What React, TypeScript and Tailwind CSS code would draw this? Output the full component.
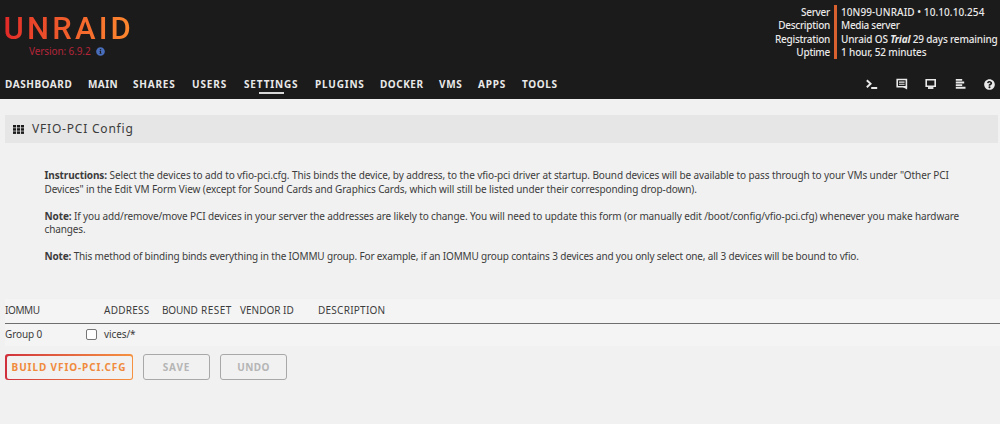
import type { ReactNode } from "react";
import { FaInfoCircle, FaQuestionCircle } from "react-icons/fa";

const tabs = [
  { label: "DASHBOARD", style: "w-[67px] tracking-[0.55px]" },
  { label: "MAIN", style: "w-[29px] tracking-[0.4px]" },
  { label: "SHARES", style: "w-[43px] tracking-[0.8px]" },
  { label: "USERS", style: "w-[36px] tracking-[0.9px]" },
  { label: "SETTINGS", style: "w-[55px] tracking-[0.85px]" },
  { label: "PLUGINS", style: "w-[49px] tracking-[0.8px]" },
  { label: "DOCKER", style: "w-[43px] tracking-[0.5px]" },
  { label: "VMS", style: "w-[23px] tracking-[0.7px]" },
  { label: "APPS", style: "w-[28px] tracking-[0.8px]" },
  { label: "TOOLS", style: "w-[35px] tracking-[0.6px]" },
];

function Icon({ children }: { children: ReactNode }) {
  return (
    <svg width="12" height="12" viewBox="0 0 12 12" fill="none" stroke="currentColor" strokeWidth="1.9">
      {children}
    </svg>
  );
}

function Header() {
  return (
    <header className="flex h-[99px] flex-col bg-[#1c1b1b] text-[#e9e9e9]">
      <div className="flex h-[68px] justify-between">
        <div className="w-[140px] pl-[3.5px] pt-3">
          <div className="w-[134px] bg-linear-to-r from-[#e22828] to-[#ff8c2f] bg-clip-text font-[Roboto,sans-serif] text-[31px] font-medium leading-[33px] tracking-[3.2px] text-transparent">
            UNRAID
          </div>
          <div className="flex items-center gap-[5px] pl-[25.5px] text-[10px] leading-[13px] tracking-[-0.1px] text-[#b3263a]">
            Version: 6.9.2
            <FaInfoCircle className="size-[9px] text-[#486dba]" />
          </div>
        </div>
        <div className="flex pt-[6px] text-[10px] font-medium leading-[13.4px]">
          <div className="-mt-px h-[54px] border-r-[3px] border-[#d9602f] pr-1 pt-px text-right tracking-[-0.28px]">
            <div>Server</div>
            <div>Description</div>
            <div>Registration</div>
            <div>Uptime</div>
          </div>
          <div className="w-[163px] whitespace-nowrap pl-1">
            <div className="tracking-[0.08px]">10N99-UNRAID • 10.10.10.254</div>
            <div className="tracking-[-0.3px]">Media server</div>
            <div className="tracking-[-0.17px]">
              Unraid OS <b className="italic">Trial</b> 29 days remaining
            </div>
            <div className="tracking-[-0.15px]">1 hour, 52 minutes</div>
          </div>
        </div>
      </div>
      <div className="flex h-[31px] justify-between pl-[5px] pr-[5px]">
        <nav className="flex gap-4 pt-[9px] text-[10px] font-bold leading-[15px]">
          {tabs.map((tab) => (
            <a key={tab.label} className={`${tab.style} flex flex-col items-center whitespace-nowrap`}>
              <span className="w-full">{tab.label}</span>
              {tab.label === "SETTINGS" && <span className="h-[2px] w-[25px] bg-[#d8d8d8]" />}
            </a>
          ))}
        </nav>
        <div className="flex h-8 items-center gap-[17.5px]">
          <Icon>
            <path d="M.8 2.2 4.6 5.7.8 9.2M5.2 10h6" />
          </Icon>
          <Icon>
            <path d="M1.2 1.5h9.2v7.2H1.2z" strokeWidth="1.6" />
            <path d="M3 4.1h5.6M3 6.2h5.6" strokeWidth="1.1" />
            <path d="M6.2 8.7h4.9v2.9z" fill="currentColor" stroke="none" />
          </Icon>
          <Icon>
            <path d="M1.2 1.7h9v6.6h-9z" strokeWidth="1.6" />
            <path d="M3 10h5.4" />
          </Icon>
          <Icon>
            <path d="M.8 1.9h6.4M.8 4.5h8.4M.8 7.1h6.4M.8 9.7h9.7" />
          </Icon>
          <FaQuestionCircle className="size-[11px]" />
        </div>
      </div>
    </header>
  );
}

function Instructions() {
  return (
    <div className="h-[156px] whitespace-nowrap pl-[44.5px] pt-[26px] text-[10px] leading-[13.5px] tracking-[-0.1px]">
      <p>
        <b>Instructions:</b> Select the devices to add to vfio-pci.cfg. This binds the device, by address, to the vfio-pci driver at startup. Bound devices will be available to pass through to your VMs under "Other PCI
        <br />
        Devices" in the Edit VM Form View (except for Sound Cards and Graphics Cards, which will still be listed under their corresponding drop-down).
      </p>
      <p className="mt-[13.5px] tracking-[-0.115px]">
        <b>Note:</b> If you add/remove/move PCI devices in your server the addresses are likely to change. You will need to update this form (or manually edit /boot/config/vfio-pci.cfg) whenever you make hardware
        <br />
        changes.
      </p>
      <p className="mt-[13.5px] tracking-[-0.16px]">
        <b>Note:</b> This method of binding binds everything in the IOMMU group. For example, if an IOMMU group contains 3 devices and you only select one, all 3 devices will be bound to vfio.
      </p>
    </div>
  );
}

function DeviceTable() {
  return (
    <div className="ml-[5px] bg-[#f4f4f4]">
      <div className="flex h-[25px] items-center whitespace-nowrap border-b border-[#6e6e6e] pb-[2px] text-[10px] tracking-[0.25px]">
        <span className="w-[99px] tracking-[-0.4px]">IOMMU</span>
        <span className="w-[58px]">ADDRESS</span>
        <span className="w-[39px] tracking-[-0.2px]">BOUND</span>
        <span className="w-[39px] tracking-[0.5px]">RESET</span>
        <span className="w-[78px] tracking-[0px]">VENDOR ID</span>
        <span>DESCRIPTION</span>
      </div>
      <div className="flex h-[22px] items-center pb-px text-[10px] tracking-[-0.1px]">
        <span className="w-[81px]">Group 0</span>
        <input type="checkbox" className="mr-[7px] size-[11px] appearance-none rounded-[2px] border border-[#767676] bg-white" />
        <span>vices/*</span>
      </div>
    </div>
  );
}

export default function App() {
  return (
    <div className="h-[424px] w-[1000px] overflow-hidden bg-[#f1f1f1] font-['Noto_Sans',sans-serif] text-[#3c3c3c]">
      <Header />
      <div className="ml-[5px] mr-[2px] mt-4 flex h-7 items-center bg-[#e6e6e6] pl-2 text-[12px] tracking-[0.8px]">
        <svg width="11" height="9" viewBox="0 0 11 9" fill="#1c1b1b" className="mr-2">
          {[0, 4, 8].map((x) =>
            [0, 3.2, 6.4].map((y) => <rect key={`${x}-${y}`} x={x} y={y} width="3.1" height="2.5" />)
          )}
        </svg>
        VFIO-PCI Config
      </div>
      <Instructions />
      <DeviceTable />
      <div className="flex gap-[10px] pl-[5px] pt-2 text-[10px] font-bold tracking-[0.9px]">
        <button className="h-[26px] w-[128px] rounded-[3px] bg-linear-to-r from-[#d02f3c] to-[#f5913f] p-[1.5px] text-[#f08a3c]">
          <span className="flex h-full items-center justify-center whitespace-nowrap rounded-[2px] bg-[#f1f1f1]">BUILD VFIO-PCI.CFG</span>
        </button>
        <button className="h-[26px] w-[67px] rounded-[3px] border border-[#a8a8a8] text-[#b5b5b5]">SAVE</button>
        <button className="h-[26px] w-[67px] rounded-[3px] border border-[#a8a8a8] tracking-[0.4px] text-[#b5b5b5]">UNDO</button>
      </div>
    </div>
  );
}
